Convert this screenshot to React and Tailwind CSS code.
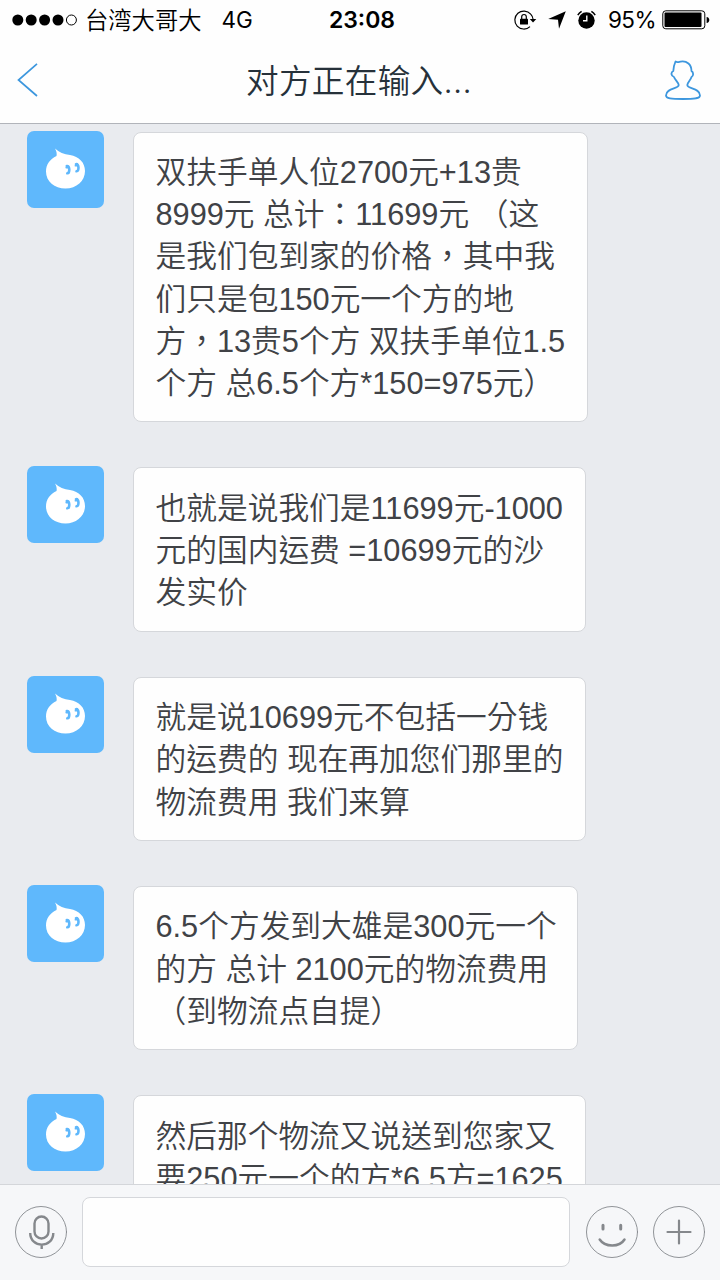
import React from "react";

const messages = [
    {
        id: 1,
        width: "w-[455px]",
        lines: [
            "双扶手单人位2700元+13贵",
            "8999元 总计：11699元 （这",
            "是我们包到家的价格，其中我",
            "们只是包150元一个方的地",
            "方，13贵5个方 双扶手单位1.5",
            "个方 总6.5个方*150=975元）",
        ],
    },
    {
        id: 2,
        width: "w-[453px]",
        lines: [
            "也就是说我们是11699元-1000",
            "元的国内运费 =10699元的沙",
            "发实价",
        ],
    },
    {
        id: 3,
        width: "w-[453px]",
        lines: [
            "就是说10699元不包括一分钱",
            "的运费的 现在再加您们那里的",
            "物流费用 我们来算",
        ],
    },
    {
        id: 4,
        width: "w-[445px]",
        lines: [
            "6.5个方发到大雄是300元一个",
            "的方 总计 2100元的物流费用",
            "（到物流点自提）",
        ],
    },
    {
        id: 5,
        width: "w-[453px]",
        lines: ["然后那个物流又说送到您家又", "要250元一个的方*6.5方=1625"],
    },
];

// Parentheses hug the text, commas and colons stay centered
function Line({ text }) {
    return (
        <span className="block whitespace-pre">
            {text.split(/([（）])/).map((part, i) =>
                part === "（" || part === "）" ? (
                    <span key={i} className="font-['Noto_Sans_CJK_SC',sans-serif] leading-none">
                        {part}
                    </span>
                ) : (
                    part
                ),
            )}
        </span>
    );
}

function Avatar() {
    return (
        <div className="-mt-px h-[77px] w-[77px] shrink-0 overflow-hidden rounded-[7px] bg-[#5fb8fc]">
            <svg viewBox="0 0 77 77" className="h-full w-full">
                <path
                    d="M28 17.500C32 21.500 37 23 43 24C52 25.500 58 31.500 58 40C58 50 49.500 57.500 38.500 57.500C27.500 57.500 19 50.500 19 40.500C19 33.500 23 28 29.500 25C30 22.500 29.500 20 28 17.500Z"
                    fill="#fff"
                />
                <g fill="none" stroke="#5fb8fc" strokeLinecap="round">
                    <path d="M39.800 35C42.800 34.200 43.200 42 40.300 42.300" strokeWidth="2.600" />
                    <path d="M49 33.200C52 32.400 52.400 40 49.500 40.300" strokeWidth="2.600" />
                    <path d="M39.300 36.500H41.500M48.500 34.700H50.700" strokeWidth="1.800" />
                </g>
            </svg>
        </div>
    );
}

function StatusBar() {
    return (
        <div className="flex h-10 items-center justify-between pl-3 pr-[10px] font-['Inter','Noto_Sans_CJK_TC',sans-serif] text-[22.500px] text-black">
            <div className="flex w-[317px] items-center">
                <svg width="66" height="12" viewBox="0 0 66 12" className="shrink-0">
                    <circle cx="5.800" cy="6" r="5.500" />
                    <circle cx="19.200" cy="6" r="5.500" />
                    <circle cx="32.600" cy="6" r="5.500" />
                    <circle cx="46" cy="6" r="5.500" />
                    <circle cx="59.400" cy="6" r="5" fill="none" stroke="#000" />
                </svg>
                <span className="ml-[7px] pt-0.5 text-[23.300px] font-[350]">台湾大哥大</span>
                <span className="ml-5">4G</span>
            </div>
            <span className="text-[23px] font-semibold">23:08</span>
            <div className="flex w-[315px] items-center justify-end">
                {/* Orientation lock */}
                <svg width="23" height="20" viewBox="0 0 23 20" fill="none" stroke="#000">
                    <path d="M16.700 4.200A9 9 0 1 0 16 16.600M16.700 4.200A9 9 0 0 1 19 9" strokeWidth="1.200" />
                    <path d="M15.800 9H22.300L19 12.500Z" fill="#000" stroke="none" />
                    <rect x="6" y="8.800" width="8" height="5.800" rx=".600" fill="#000" stroke="none" />
                    <path d="M7.700 9V6.800A2.300 2.300 0 0 1 12.300 6.800V9" strokeWidth="1.200" />
                </svg>
                {/* Location arrow */}
                <svg width="18" height="18" viewBox="0 0 18 18" className="ml-[11px]">
                    <path d="M17.800 .200L11 17.800L10 8.700L.200 7.900Z" />
                </svg>
                {/* Alarm */}
                <svg width="19" height="20" viewBox="0 0 19 20" className="ml-[11px]">
                    <circle cx="9.500" cy="10.500" r="8.200" />
                    <path d="M.800 5.200A12 12 0 0 1 4.600 1.300M18.200 5.200A12 12 0 0 0 14.400 1.300" fill="none" stroke="#000" strokeWidth="1.500" />
                    <path d="M9.800 5.500V10.800H6" fill="none" stroke="#fff" strokeWidth="1.400" />
                </svg>
                <span className="ml-3 tracking-[-0.025em]">95%</span>
                <svg width="48" height="20" viewBox="0 0 48 20" className="ml-[6px]">
                    <rect x=".800" y=".800" width="42" height="18" rx="3" fill="none" stroke="#000" strokeWidth="1" />
                    <rect x="2.500" y="2.500" width="37" height="14.600" rx="1" />
                    <path d="M44.600 7C48.200 7 48.200 13 44.600 13Z" />
                </svg>
            </div>
        </div>
    );
}

function Header() {
    return (
        <header className="h-[124px] shrink-0 border-b border-[#b1b4ba] bg-[#fefefe]">
            <StatusBar />
            <div className="flex h-20 items-center justify-between pl-[17px] pr-[19px]">
                <svg width="36" height="34" viewBox="0 0 36 34" fill="none" stroke="#3d97de" strokeWidth="1.700">
                    <path d="M20 .800L1.500 17L20 33" />
                </svg>
                <h1 className="pt-[3px] font-['Inter','Noto_Sans_CJK_SC',sans-serif] text-[32.640px] font-[350] tracking-[0.300px] text-[#26313a]">
                    对方正在输入...
                </h1>
                <svg width="36" height="40" viewBox="0 0 36 40" fill="none" stroke="#3d97de" strokeWidth="1.800" strokeLinejoin="round">
                    <path d="M10.500 1.500C12 2.700 13.500 2 15.500 1.600C22 .500 26.500 4.500 26.500 11C28.800 12.500 28.500 16 26.500 17C25.500 20.500 22.500 22.500 22.300 25C22.300 29 35 28 35 35.500C35 38.500 30 39 18 39C6 39 1 38.500 1 35.500C1 28 13.700 29 13.700 25C13.500 22.500 10 20 9 17C6 16 5.500 12.500 8.300 11C8.300 7.500 9.200 4.500 10.500 1.500Z" />
                </svg>
            </div>
        </header>
    );
}

function CircleButton({ label, children }) {
    return (
        <button aria-label={label} className="h-[52px] w-[52px] shrink-0">
            <svg viewBox="0 0 52 52" fill="none" stroke="#85888c" strokeLinecap="round">
                <circle cx="26" cy="26" r="25.500" strokeWidth=".900" />
                {children}
            </svg>
        </button>
    );
}

function InputBar() {
    return (
        <footer className="flex h-24 shrink-0 items-center border-t border-[#d4d6da] bg-[#f6f7f9] px-[15px] pb-[2px]">
            <CircleButton label="语音">
                <rect x="19.500" y="10.500" width="14" height="22" rx="7" strokeWidth="2.400" />
                <path d="M15.200 27C15.200 42.500 38.300 42.500 38.300 27M26.700 38.700V43" strokeWidth="2.400" strokeLinecap="butt" />
            </CircleButton>
            <input className="ml-[15px] h-[70px] w-[488px] rounded-[8px] border border-[#d5d7db] bg-[#fefefe] px-4 text-[30px] outline-none" />
            <div className="ml-auto flex gap-[15.500px]">
                <CircleButton label="表情">
                    <path d="M17 19.300V23M34.700 19.300V23" strokeWidth="3" />
                    <path d="M13.700 33.500C19 41.500 33.500 41.500 38.500 33.500" strokeWidth="2.500" />
                </CircleButton>
                <CircleButton label="更多">
                    <path d="M14.500 26H37.500M26 14.500V37.500" strokeWidth="2.200" />
                </CircleButton>
            </div>
        </footer>
    );
}

export default function App() {
    return (
        <div className="flex h-[1280px] w-[720px] flex-col overflow-hidden bg-[#e9ebef]">
            <Header />
            <main className="flex min-h-0 flex-1 flex-col gap-[45px] overflow-hidden pl-[27px] pt-[7.500px]">
                {messages.map((msg) => (
                    <div key={msg.id} className="flex shrink-0 items-start gap-[29px]">
                        <Avatar />
                        <div
                            className={`rounded-[8px] border border-[#d5d7db] bg-[#fefefe] pb-[16px] pl-[21.500px] pt-[19.500px] font-['Liberation_Sans','Noto_Sans_CJK_TC',sans-serif] text-[30.720px] font-[350] leading-[42.240px] text-[#404246] ${msg.width}`}
                        >
                            {msg.lines.map((line) => (
                                <Line key={line} text={line} />
                            ))}
                        </div>
                    </div>
                ))}
            </main>
            <InputBar />
        </div>
    );
}
